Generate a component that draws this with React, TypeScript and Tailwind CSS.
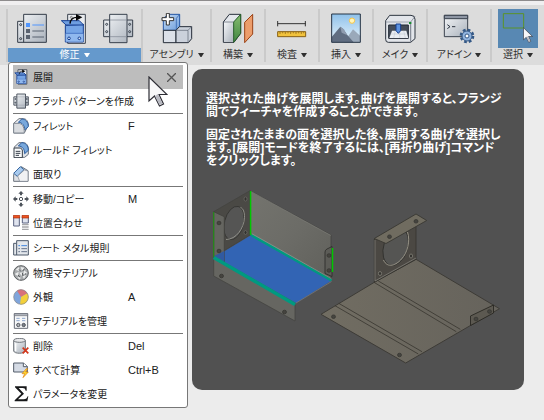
import React from 'react';

interface ToolGroupProps {
    label: string;
    width: string;
    active?: boolean;
    last?: boolean;
    children: React.ReactNode;
}

interface MenuEntry {
    label: string;
    icon: React.ReactNode;
    shortcut?: string;
    separator?: boolean;
}

// Gradients shared by the toolbar and the menu icons
const SharedDefs = () => (
    <svg width="0" height="0" className="absolute" aria-hidden="true">
        <defs>
            <linearGradient id="steel" x1="0" y1="0" x2="1" y2="1">
                <stop offset="0" stopColor="#f4f6f8" />
                <stop offset="1" stopColor="#a9b1bb" />
            </linearGradient>
            <linearGradient id="blue" x1="0" y1="0" x2="1" y2="1">
                <stop offset="0" stopColor="#c3daf5" />
                <stop offset="1" stopColor="#6f9fdc" />
            </linearGradient>
            <linearGradient id="green" x1="0" y1="0" x2="0" y2="1">
                <stop offset="0" stopColor="#86bd70" />
                <stop offset="1" stopColor="#3f8540" />
            </linearGradient>
            <linearGradient id="sky" x1="0" y1="0" x2="0" y2="1">
                <stop offset="0" stopColor="#8fc1ea" />
                <stop offset="1" stopColor="#e8f4fb" />
            </linearGradient>
            <linearGradient id="sheet" x1="0" y1="0" x2="1" y2="1">
                <stop offset="0" stopColor="#74746e" />
                <stop offset="0.5" stopColor="#6c6c67" />
                <stop offset="1" stopColor="#60605b" />
            </linearGradient>
            <linearGradient id="base" x1="0" y1="0" x2="1" y2="0">
                <stop offset="0" stopColor="#716d62" />
                <stop offset="1" stopColor="#66635c" />
            </linearGradient>
        </defs>
    </svg>
);

const BigIcon = ({ box, children }: { box: string; children: React.ReactNode }) => (
    <svg width="32" height="32" viewBox={box} fill="none" strokeWidth="3" aria-hidden="true">
        {children}
    </svg>
);

const SmallIcon = ({ box, children }: { box: string; children: React.ReactNode }) => (
    <svg width="16" height="16" viewBox={box} fill="none" strokeWidth="3" className="shrink-0" aria-hidden="true">
        {children}
    </svg>
);

const Caret = () => (
    <svg width="6" height="4" viewBox="0 0 6 4" fill="currentColor" aria-hidden="true">
        <path d="M0 0h6L3.5 4h-1z" />
    </svg>
);

const Pointer = ({ className }: { className: string }) => (
    <svg viewBox="0 0 20 31" className={className} aria-hidden="true">
        <path d="M1 1v24l5.500-5 5 10 4-2-4.500-9.500H19z" fill="#f7f7f8" stroke="#2d2d35" strokeWidth="1.200" />
        <path d="M7 20l4.500 9 3-1.500-4.500-9.500z" fill="#b9bac2" />
    </svg>
);

const RulesIcon = () => (
    <BigIcon box="48 39 96 96">
        <path d="M53 64H71V43H139V127H53z" fill="url(#steel)" stroke="#333c48" />
        <path d="M71 64V127" stroke="#333c48" />
        <circle cx="62" cy="74" r="3" stroke="#333c48" />
        <circle cx="62" cy="116" r="3" stroke="#333c48" />
        <path d="M78 69h12v12H78z" fill="#5096ff" />
        <path d="M78 87h12v12H78zM78 105h12v12H78z" fill="#596270" />
        <path d="M97 75h35" stroke="#5096ff" />
        <path d="M97 93h35M97 111h35" stroke="#596270" />
    </BigIcon>
);

const UnfoldShape = () => (
    <>
        <path d="M204 43h53v87h-53z" fill="#e9ebee" stroke="#3a424e" />
        <path d="M197 76l54-3v53H197z" fill="#76a5e6" stroke="#173f91" />
        <path d="M198 100h53v25h-53z" fill="#90b8ee" />
        <path d="M185 62h54l13 13h-53z" fill="#6f9ee0" stroke="#173f91" />
        <path d="M198 100h53" stroke="#2c5cb4" strokeWidth="2" />
        <circle cx="208" cy="115" r="4" fill="#d3e3f8" stroke="#173f91" />
        <circle cx="239" cy="115" r="4" fill="#d3e3f8" stroke="#173f91" />
        <circle cx="215" cy="52" r="3" stroke="#555" strokeWidth="2" />
        <path d="M211 71c1-12 8-19 21-19" stroke="#050505" strokeWidth="4" />
        <path d="M229 42l19 10-19 10z" fill="#050505" />
    </>
);

const FlatPatternShape = () => (
    <>
        <path d="M329 43h52v17h17v50h-17v18h-52v-18h-18V60h18z" fill="url(#steel)" stroke="#38414d" />
        <path d="M329 60v50M381 60v50" stroke="#38414d" />
        <path d="M330 60h50M330 110h50" stroke="#7b838f" strokeWidth="2" />
        <circle cx="320" cy="73" r="3" stroke="#38414d" />
        <circle cx="320" cy="95" r="3" stroke="#38414d" />
        <circle cx="389" cy="73" r="3" stroke="#38414d" />
        <circle cx="389" cy="95" r="3" stroke="#38414d" />
    </>
);

const AssemblyIcon = () => (
    <BigIcon box="60 39 96 96">
        <path d="M67 55l16-12h33v36l-10 12H67z" fill="url(#blue)" stroke="#2456a4" />
        <path d="M106 55v35M106 55l10-12" stroke="#2456a4" strokeWidth="2" />
        <path d="M67 91h38v37H67z" fill="#dbe0e8" stroke="#252d38" />
        <path d="M105 91l10-11h37v36l-10 12h-37z" fill="#cbd1db" stroke="#252d38" />
        <path d="M105 91h36v37M141 91l11-11" stroke="#59616e" strokeWidth="2" />
        <path d="M76 40h9v13h13v9H85v13h-9V62H63v-9h13z" fill="#fff" stroke="#333" />
    </BigIcon>
);

const ConstructIcon = () => (
    <BigIcon box="246 39 96 96">
        <path d="M250 66l18-23h34v57l-20 27h-32z" fill="#e4e7ec" stroke="#28303b" />
        <path d="M252 67h29v58h-29z" fill="url(#steel)" />
        <path d="M281 66l21-23v57l-21 27z" fill="url(#green)" stroke="#255d29" />
        <path d="M250 66h31" stroke="#59616e" strokeWidth="2" />
        <path d="M314 67l24-24v59l-24 26z" fill="#ec9d6b" stroke="#9b4216" />
    </BigIcon>
);

const InspectIcon = () => (
    <BigIcon box="18 39 96 96">
        <path d="M23 71h84M23 63v16M106 63v16" stroke="#333" />
        <path d="M23 95h84v15H23z" fill="#f2c33d" stroke="#865f13" />
        <path d="M30 96v6M38 96v4M46 96v6M54 96v4M62 96v6M70 96v4M78 96v6M86 96v4M94 96v6M101 96v4" stroke="#865f13" strokeWidth="2" />
    </BigIcon>
);

const InsertIcon = () => (
    <BigIcon box="180 39 96 96">
        <path d="M185 42h86v85h-86z" fill="url(#sky)" />
        <circle cx="246" cy="62" r="8" fill="#fff6bd" stroke="#f7c447" />
        <path d="M222 127l27-39 9 8 13 12v19z" fill="#9aa9ba" />
        <path d="M185 111l26-31 9 7 12 18 19 22h-66z" fill="#606d81" />
        <path d="M211 80l10 8 11 18-17-8z" fill="#8f9caf" />
        <path d="M185 42h86v85h-86z" stroke="#263445" />
    </BigIcon>
);

const MakeIcon = () => (
    <BigIcon box="342 39 96 96">
        <path d="M347 62l12-16h64q12 0 12 12v58l-13 11h-67q-8 0-8-9z" fill="#e2e5ea" stroke="#2c343f" />
        <path d="M347 66h75v57" stroke="#808894" strokeWidth="2" />
        <path d="M422 66l13-17M422 127V66" stroke="#69717e" strokeWidth="2" />
        <path d="M356 75h59v40h-59z" fill="#454d59" stroke="#222a35" />
        <path d="M366 92h43l6 22h-57z" fill="#e9edf2" />
        <path d="M361 102h49M376 92l-5 22M389 94v20M401 92l5 22" stroke="#aab4c0" strokeWidth="1" />
        <path d="M378 72h14v20l-7 8-7-8z" fill="#5b91df" stroke="#153f90" />
        <path d="M417 66h7v6h-7z" fill="#188b30" />
    </BigIcon>
);

const AddinIcon = () => (
    <BigIcon box="129 39 96 96">
        <path d="M133 46h70v64h-70z" fill="url(#steel)" stroke="#3a424e" />
        <path d="M133 46h70v10h-70z" fill="#8e96a4" stroke="#3a424e" />
        <path d="M142 74l8 6-8 6M156 80h10" stroke="#2c3440" />
        <circle cx="201" cy="108" r="18" stroke="#345886" strokeWidth="8" strokeDasharray="8 6.100" />
        <circle cx="201" cy="108" r="15" fill="#91b4df" stroke="#345886" />
        <circle cx="201" cy="108" r="6" fill="#fff" stroke="#345886" />
    </BigIcon>
);

const SelectIcon = () => (
    <span className="relative block h-[39px] w-10 bg-[#5888b3]">
        <svg width="40" height="39" viewBox="294 27 120 117" fill="none" aria-hidden="true">
            <path d="M310 41h61v43h-61z" stroke="#5b9426" strokeWidth="3" />
        </svg>
        <Pointer className="absolute left-[25px] top-[18px] h-4 w-[10px]" />
    </span>
);

const menu: MenuEntry[] = [
    {
        label: 'フラット パターンを作成',
        icon: <SmallIcon box="306 37 96 96"><g strokeWidth="5"><FlatPatternShape /></g></SmallIcon>,
        separator: true,
    },
    {
        label: 'フィレット',
        shortcut: 'F',
        icon: (
            <SmallIcon box="39 174 48 48">
                <path d="M41 190l16-14h13c9 0 15 9 15 19l-12 24H41z" fill="#f1f2f4" stroke="#69717c" />
                <path d="M55 187l10-10c12 0 20 9 20 23l-11 10c0-13-7-23-19-23z" fill="#78a8dc" stroke="#2c5d9e" />
                <path d="M41 190h13c12 0 19 9 19 29H41z" fill="#d9dce0" stroke="#828a94" />
            </SmallIcon>
        ),
    },
    {
        label: 'ルールド フィレット',
        icon: (
            <SmallIcon box="39 246 48 48">
                <path d="M42 262l15-14h13c9 0 15 9 15 19v16L74 292H56z" fill="#dfe3e8" stroke="#69717c" />
                <path d="M55 258l10-10c12 0 20 9 20 23l-11 10c0-13-7-23-19-23z" fill="#78a8dc" stroke="#2c5d9e" />
                <path d="M42 264h20l5 6v23H42z" fill="#f9fafb" stroke="#343c46" />
                <path d="M47 274h14M47 280h14M47 286h10" stroke="#343c46" />
            </SmallIcon>
        ),
    },
    {
        label: '面取り',
        icon: (
            <SmallIcon box="39 318 48 48">
                <path d="M41 343l23-23 20 12v32H41z" fill="#dfe1e5" stroke="#6b737d" />
                <path d="M41 340l20-20 11 9-20 20z" fill="#a8caee" stroke="#37669f" />
                <path d="M53 348l20-18 11 3v31H59z" fill="#f0f1f3" stroke="#7d858f" strokeWidth="2" />
            </SmallIcon>
        ),
        separator: true,
    },
    {
        label: '移動/コピー',
        shortcut: 'M',
        icon: (
            <SmallIcon box="39 18 48 48">
                <path d="M63 18l8 8h-5v5h-6v-5h-5zM63 66l8-8h-5v-5h-6v5h-5zM39 42l8-8v5h5v6h-5v5zM87 42l-8-8v5h-5v6h5v5z" fill="#4d535b" />
                <circle cx="63" cy="42" r="5" stroke="#4d535b" />
            </SmallIcon>
        ),
    },
    {
        label: '位置合わせ',
        icon: (
            <SmallIcon box="39 90 48 48">
                <path d="M41 97h17v26H41zM67 97h18v17H67z" fill="#e0e4ef" stroke="#5b6380" />
                <path d="M40 91h19v8H40zM66 91h20v8H66z" fill="#ee5420" stroke="#a42a0d" strokeWidth="2" />
                <path d="M66 119h20M66 126h20M66 133h20" stroke="#a6a6a9" strokeWidth="4" />
            </SmallIcon>
        ),
        separator: true,
    },
    {
        label: 'シート メタル規則',
        icon: (
            <SmallIcon box="39 165 48 48">
                <path d="M41 175h9v-8h35v43H41z" fill="#e3e7ec" stroke="#4d596a" />
                <path d="M50 175v35" stroke="#4d596a" />
                <path d="M55 182h5M64 182h17" stroke="#4186df" />
                <path d="M55 191h5M64 191h17M55 200h5M64 200h17" stroke="#65738a" />
            </SmallIcon>
        ),
        separator: true,
    },
    {
        label: '物理マテリアル',
        icon: (
            <SmallIcon box="39 240 48 48">
                <circle cx="63" cy="264" r="22" fill="#a8abad" stroke="#5d6062" />
                <path d="M47 255l9-9 3 12zM62 246l11 2-7 10zM44 267l12-7-2 13zM58 263l9-1-2 11zM72 256l10 8-12 4zM52 276l11 1-4 7zM68 274l10-4-6 12z" fill="#eceded" />
                <path d="M57 253l5 6M68 258l6-7M54 270l6 7M67 264l2 9M75 266l3 2" stroke="#575a5c" />
            </SmallIcon>
        ),
    },
    {
        label: '外観',
        shortcut: 'A',
        icon: (
            <SmallIcon box="39 312 48 48">
                <circle cx="63" cy="336" r="22" fill="#7fa5db" />
                <path d="M63 336L51 317a22 22 0 0 1 31 8z" fill="#d8717b" />
                <path d="M63 336l19-11a22 22 0 0 1-22 33z" fill="#f3d03a" />
                <circle cx="63" cy="336" r="22" stroke="#8a8783" strokeWidth="2" />
            </SmallIcon>
        ),
    },
    {
        label: 'マテリアルを管理',
        icon: (
            <SmallIcon box="39 39 48 48">
                <path d="M43 41h40v44H43z" fill="#f7f8f9" stroke="#686d77" />
                <path d="M43 41h40v6H43z" fill="#b7bcc4" stroke="#686d77" strokeWidth="2" />
                <path d="M49 55h10M66 55h10M49 62h10M66 62h10" stroke="#8ea7cc" />
                <circle cx="55" cy="75" r="5" fill="#b3b6bb" stroke="#52565e" />
                <circle cx="71" cy="75" r="5" fill="#7b818b" stroke="#52565e" />
            </SmallIcon>
        ),
        separator: true,
    },
    {
        label: '削除',
        shortcut: 'Del',
        icon: (
            <SmallIcon box="39 114 48 48">
                <path d="M41 122v31c2 9 32 9 35 0v-31z" fill="url(#steel)" stroke="#70757b" />
                <ellipse cx="58.500" cy="121" rx="17.500" ry="6" fill="#e7e8ea" stroke="#70757b" />
                <path d="M47 130v23" stroke="#fff" strokeWidth="4" />
                <path d="M68 143l17 17M85 143l-17 17" stroke="#d2371b" strokeWidth="5" />
            </SmallIcon>
        ),
    },
    {
        label: 'すべて計算',
        shortcut: 'Ctrl+B',
        icon: (
            <SmallIcon box="39 186 48 48">
                <path d="M41 189h29l12 10v17H41z" fill="#d5dbe5" stroke="#535d6a" />
                <path d="M70 189v11h12" fill="#fff" stroke="#535d6a" />
                <path d="M79 206l-13 15h8l-5 12 16-17h-8l6-10z" fill="#ffda31" stroke="#dc7b0b" strokeWidth="2" />
            </SmallIcon>
        ),
    },
    {
        label: 'パラメータを変更',
        icon: (
            <SmallIcon box="39 258 48 48">
                <path d="M45 259h35v13h-3c-1-6-4-8-9-8H56l16 17-18 17h17c7 0 10-3 12-9h2l-3 15H44v-3l20-20-19-19z" fill="#17181a" />
            </SmallIcon>
        ),
    },
];

const ToolGroup: React.FC<ToolGroupProps> = ({ label, width, active, last, children }) => (
    <div className={`flex flex-col items-center ${width} ${last ? '' : 'border-r-2 border-[#cacaca]'}`}>
        <div className="flex h-[39px] w-full items-center justify-center">{children}</div>
        <button
            type="button"
            className={
                active
                    ? 'flex h-[14px] w-full items-center justify-center gap-1 bg-[#6599cc] text-[10px] leading-[14px] text-white'
                    : 'flex h-[14px] w-full items-center justify-center gap-1 text-[10px] leading-[14px] text-[#303030]'
            }
        >
            <span className="whitespace-nowrap">{label}</span>
            <Caret />
        </button>
    </div>
);

const Hole = ({ x, y }: { x: number; y: number }) => (
    <ellipse cx={x} cy={y} rx="2" ry="1.800" fill="#45443f" stroke="#34342f" strokeWidth="0.700" />
);

// Folded bracket on the left, the same part with its bends opened on the right
const UnfoldDrawing = () => (
    <svg viewBox="206 180 304 196" width="304" height="196" className="mt-3" role="img" aria-label="展開">
        <g stroke="#42433f" strokeWidth="0.800" strokeLinejoin="round">
            <path d="M250 190.700L331 235v44l-81-44z" fill="url(#sheet)" />
            <path d="M213.700 211.700L250 190.700V235l-36.300 22z" fill="#4a4945" />
        </g>
        <path d="M251 191.500l80 44" stroke="#85857f" strokeWidth="0.600" />
        <ellipse cx="234" cy="223" rx="9.500" ry="17" transform="rotate(14 234 223)" fill="#555554" stroke="#33332f" strokeWidth="0.800" />
        <path d="M226 239.500c10 0 18-11 18.500-22 0-5-1-9-4-10" fill="none" stroke="#96968e" strokeWidth="0.900" />
        <ellipse cx="245.500" cy="199" rx="1.500" ry="2" fill="#32322f" stroke="#777770" strokeWidth="0.600" />
        <ellipse cx="245.500" cy="232.500" rx="1.500" ry="2" fill="#32322f" stroke="#777770" strokeWidth="0.600" />
        <path d="M215 257l35.500-21.500L331 281l-35 22z" fill="#3264b4" />
        <path d="M213.700 211.700l10.600 5V262l-10.600-5z" fill="#656560" stroke="#41413d" strokeWidth="0.800" />
        <path d="M214 256l10.300-5v11z" fill="#315aa0" />
        <Hole x={219} y={223} />
        <Hole x={219} y={251} />
        <path d="M213.700 258.500l81.300 46.500v16l-81.300-45z" fill="#666661" stroke="#454541" strokeWidth="0.800" />
        <Hole x={221.500} y={276} />
        <Hole x={284.500} y={312} />
        <path d="M213.700 257.500L295 304.500" stroke="#009a80" strokeWidth="3.500" />
        <path d="M251 235l80.500 45.500" stroke="#009a80" strokeWidth="2.500" />
        <path d="M252 233.800l79.500 45" stroke="#9aa59e" strokeWidth="0.600" />
        <path d="M325 252q0-2 2-3l5-2.500v30l-7-3z" fill="#5c5c57" stroke="#30302d" strokeWidth="0.900" />
        <Hole x={329} y={255.500} />
        <Hole x={329} y={270.500} />
        <path d="M250.600 191v44M332.500 248v24" stroke="#00c800" strokeWidth="1.500" />
        <path d="M213.700 212v45" stroke="#248b18" strokeWidth="1.200" />
        <path d="M296 303l35.500-21.500" stroke="#777" strokeWidth="0.800" />

        <path d="M321 314.300l53.300-32 41.700-23 83.500 49.400L405.700 363z" fill="url(#base)" stroke="#3d3b36" strokeWidth="1" />
        <path d="M335 305.700l83.300 48.300M338.700 303.300l83.300 48.400M374.300 282.500l82 49.200M378.300 281l82 48.300" stroke="#37352f" strokeWidth="0.800" />
        <path d="M374.300 239L416 216v43.300l-41.700 23z" fill="#4b4843" stroke="#35342f" strokeWidth="0.800" />
        <ellipse cx="395.700" cy="247" rx="12" ry="19" transform="rotate(18 395.700 247)" fill="#555553" stroke="#2f2e2b" strokeWidth="0.800" />
        <path d="M383.500 260c4 9 13 5 18-1 6-6 9-18 6-27" fill="none" stroke="#a09c8f" strokeWidth="0.900" />
        <path d="M374.300 238.500l41.700-24.500 10.700 6.500-40.700 23z" fill="#706c60" stroke="#393832" strokeWidth="0.900" />
        <path d="M375 240v41l41-23" fill="none" stroke="#86857e" strokeWidth="0.700" />
        <Hole x={389.500} y={236.700} />
        <Hole x={416} y={221.300} />
        <ellipse cx="380" cy="273.500" rx="1.600" ry="2" fill="#33322f" stroke="#8b897f" strokeWidth="0.700" />
        <ellipse cx="411" cy="256" rx="1.600" ry="2" fill="#33322f" stroke="#8b897f" strokeWidth="0.700" />
        <path d="M470.500 316l23-11v8l-23 12.500z" fill="#5c5951" stroke="#292823" strokeWidth="0.900" />
        <Hole x={476} y={319} />
        <Hole x={489.500} y={311.500} />
        <Hole x={333.500} y={316.700} />
        <Hole x={399.500} y={355} />
    </svg>
);

export default function App() {
    return (
        <div
            lang="ja"
            className="min-h-screen bg-[#ececec] font-['Liberation_Sans','Noto_Sans_CJK_JP',sans-serif] [font-feature-settings:'palt']"
        >
            <SharedDefs />
            <header className="border-t border-[#8e8c8d] bg-[#f0eff0] pt-1">
                <div className="flex h-[60px] bg-[#dcdcdc] pt-1 pl-1.5">
                    <div className="flex h-[53px] border-l-2 border-[#cacaca]">
                        <ToolGroup label="修正" width="w-[135px]" active>
                            <div className="flex w-full items-center justify-between pr-[7px] pl-2">
                                <RulesIcon />
                                <BigIcon box="178 39 96 96"><UnfoldShape /></BigIcon>
                                <BigIcon box="306 39 96 96"><FlatPatternShape /></BigIcon>
                            </div>
                        </ToolGroup>
                        <ToolGroup label="アセンブリ" width="w-[69px]"><AssemblyIcon /></ToolGroup>
                        <ToolGroup label="構築" width="w-[54px]"><ConstructIcon /></ToolGroup>
                        <ToolGroup label="検査" width="w-[54px]"><InspectIcon /></ToolGroup>
                        <ToolGroup label="挿入" width="w-[54px]"><InsertIcon /></ToolGroup>
                        <ToolGroup label="メイク" width="w-[54px]"><MakeIcon /></ToolGroup>
                        <ToolGroup label="アドイン" width="w-[64px]"><AddinIcon /></ToolGroup>
                        <ToolGroup label="選択" width="w-[52px]" last><SelectIcon /></ToolGroup>
                    </div>
                </div>
            </header>

            <main className="relative -mt-[3px] flex items-start pl-2">
                <nav className="relative w-[180px] rounded-[3px] border border-[#777] bg-white px-1 pt-[2px] pb-px text-[10px] text-[#202020]">
                    <ul>
                        <li className="flex h-6 items-center bg-[#bdbdbd] pr-[7px]">
                            <button type="button" className="flex grow items-center gap-1 text-left">
                                <SmallIcon box="176 39 92 96"><g strokeWidth="5"><UnfoldShape /></g></SmallIcon>
                                展開
                            </button>
                            <button type="button" aria-label="閉じる">
                                <svg width="9" height="9" viewBox="0 0 9 9" stroke="#555" strokeWidth="1.300" aria-hidden="true">
                                    <path d="M0 0l9 9M9 0L0 9" />
                                </svg>
                            </button>
                        </li>
                        {menu.map((entry) => (
                            <li key={entry.label} className={entry.separator ? 'border-b border-[#777]' : ''}>
                                <button type="button" className="flex h-6 w-full items-center gap-1 text-left whitespace-nowrap">
                                    {entry.icon}
                                    <span className="w-[91px]">{entry.label}</span>
                                    {entry.shortcut && (
                                        <kbd className="font-['Liberation_Sans',sans-serif] text-[11px]">{entry.shortcut}</kbd>
                                    )}
                                </button>
                            </li>
                        ))}
                    </ul>
                    <Pointer className="absolute top-[13px] left-[139px] h-[31px] w-5" />
                </nav>

                <section
                    role="tooltip"
                    className="mt-[7px] ml-1 w-[332px] rounded-[10px] bg-[#515151] px-[14px] pt-6 pb-[14px] text-[12px] leading-[13px] font-bold text-white"
                >
                    <p className="whitespace-nowrap">
                        選択された曲げを展開します。曲げを展開すると、フランジ
                        <br />
                        間でフィーチャを作成することができます。
                    </p>
                    <p className="mt-2.5 whitespace-nowrap">
                        固定されたままの面を選択した後、展開する曲げを選択し
                        <br />
                        ます。[展開]モードを終了するには、[再折り曲げ]コマンド
                        <br />
                        をクリックします。
                    </p>
                    <UnfoldDrawing />
                </section>
            </main>
        </div>
    );
}
